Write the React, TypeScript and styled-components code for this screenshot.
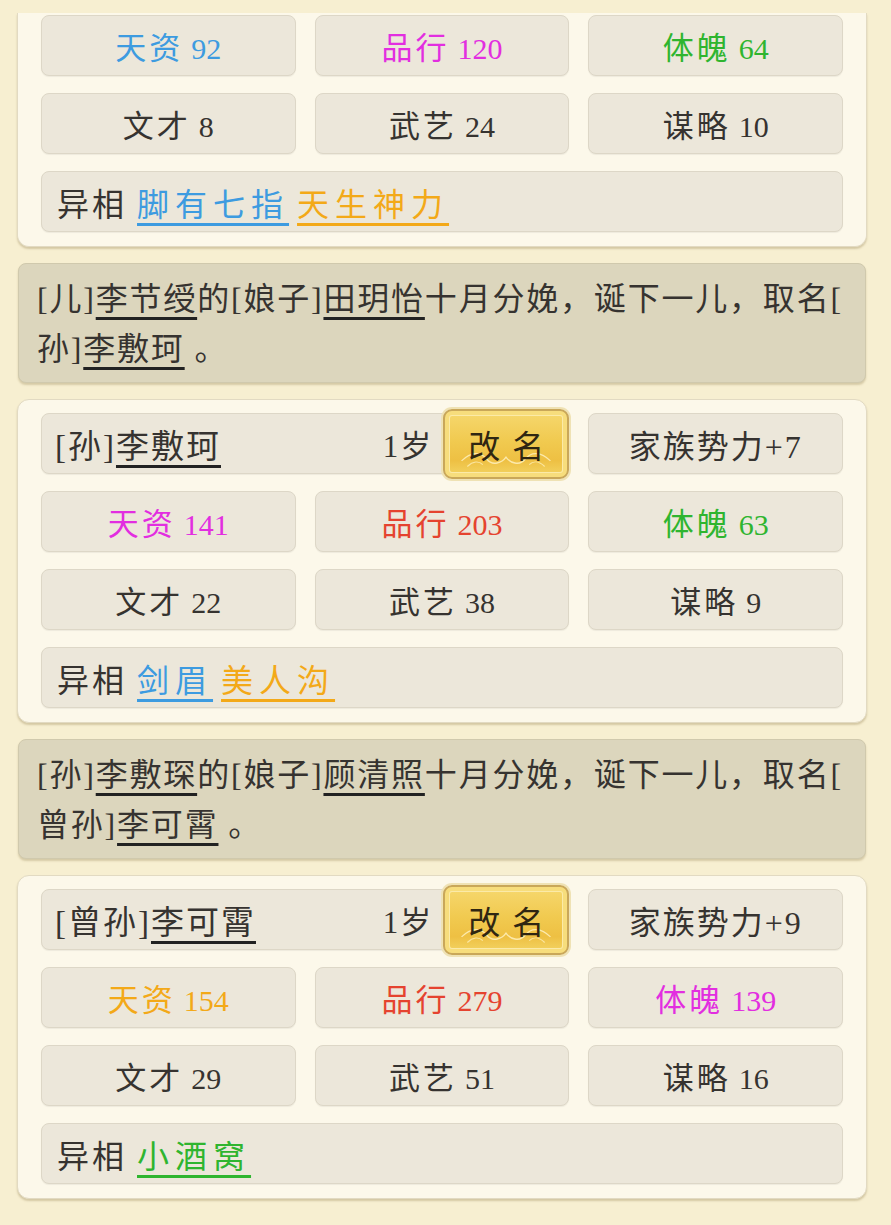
import React from "react";
import styled, { createGlobalStyle } from "styled-components";

const GlobalStyle = createGlobalStyle`
  html, body {
    margin: 0;
    padding: 0;
    background: #f7efd1;
  }
  body {
    font-family: "Liberation Serif", "Noto Sans CJK SC", serif;
    color: #363330;
  }
`;

type Tone = "plain" | "blue" | "pink" | "green" | "red" | "orange";

const tones: Record<Tone, string> = {
  plain: "#363330",
  blue: "#3d9be0",
  pink: "#e22ee0",
  green: "#2fb52f",
  red: "#e5432f",
  orange: "#f3a918",
};

type Stat = { label: string; value: number; tone: Tone };
type Trait = { text: string; tone: Tone };
type Person = {
  title?: string;
  name?: string;
  age?: number;
  power?: number;
  stats: Stat[];
  traits: Trait[];
};
type Seg = { t: string; u?: boolean };

const people: Person[] = [
  {
    stats: [
      { label: "天资", value: 92, tone: "blue" },
      { label: "品行", value: 120, tone: "pink" },
      { label: "体魄", value: 64, tone: "green" },
      { label: "文才", value: 8, tone: "plain" },
      { label: "武艺", value: 24, tone: "plain" },
      { label: "谋略", value: 10, tone: "plain" },
    ],
    traits: [
      { text: "脚有七指", tone: "blue" },
      { text: "天生神力", tone: "orange" },
    ],
  },
  {
    title: "[孙]",
    name: "李敷珂",
    age: 1,
    power: 7,
    stats: [
      { label: "天资", value: 141, tone: "pink" },
      { label: "品行", value: 203, tone: "red" },
      { label: "体魄", value: 63, tone: "green" },
      { label: "文才", value: 22, tone: "plain" },
      { label: "武艺", value: 38, tone: "plain" },
      { label: "谋略", value: 9, tone: "plain" },
    ],
    traits: [
      { text: "剑眉", tone: "blue" },
      { text: "美人沟", tone: "orange" },
    ],
  },
  {
    title: "[曾孙]",
    name: "李可霄",
    age: 1,
    power: 9,
    stats: [
      { label: "天资", value: 154, tone: "orange" },
      { label: "品行", value: 279, tone: "red" },
      { label: "体魄", value: 139, tone: "pink" },
      { label: "文才", value: 29, tone: "plain" },
      { label: "武艺", value: 51, tone: "plain" },
      { label: "谋略", value: 16, tone: "plain" },
    ],
    traits: [{ text: "小酒窝", tone: "green" }],
  },
];

const births: Seg[][][] = [
  [
    [
      { t: "[儿]" },
      { t: "李节绶", u: true },
      { t: "的[娘子]" },
      { t: "田玥怡", u: true },
      { t: "十月分娩，诞下一儿，取名[" },
    ],
    [{ t: "孙]" }, { t: "李敷珂", u: true }, { t: " 。" }],
  ],
  [
    [
      { t: "[孙]" },
      { t: "李敷琛", u: true },
      { t: "的[娘子]" },
      { t: "顾清照", u: true },
      { t: "十月分娩，诞下一儿，取名[" },
    ],
    [{ t: "曾孙]" }, { t: "李可霄", u: true }, { t: " 。" }],
  ],
];

function RenameButton() {
  return (
    <GoldButton>
      <Flourish viewBox="0 0 120 64" preserveAspectRatio="none">
        <path
          d="M14 50 C24 40 34 40 40 48 M106 50 C96 40 86 40 80 48 M40 48 C46 56 56 52 60 46 C64 52 74 56 80 48"
          fill="none"
          stroke="#fff3c4"
          strokeWidth="1.4"
          opacity="0.8"
        />
        <path
          d="M20 56 C26 50 32 50 36 54 M100 56 C94 50 88 50 84 54"
          fill="none"
          stroke="#fff3c4"
          strokeWidth="1.2"
          opacity="0.7"
        />
      </Flourish>
      <GoldLabel>改名</GoldLabel>
    </GoldButton>
  );
}

function PersonCard({ person, cut }: { person: Person; cut?: boolean }) {
  return (
    <Card $cut={cut}>
      {person.name && (
        <>
          <NameCell>
            <span>{person.title}</span>
            <Underlined>{person.name}</Underlined>
            <Age>
              <Num>{person.age}</Num>岁
            </Age>
            <RenameButton />
          </NameCell>
          <Cell>
            <PowerText>
              家族势力<Num>+{person.power}</Num>
            </PowerText>
          </Cell>
        </>
      )}
      {person.stats.map((s) => (
        <Cell key={s.label}>
          <StatText $tone={s.tone}>
            {s.label}
            <StatNum>{s.value}</StatNum>
          </StatText>
        </Cell>
      ))}
      <TraitCell>
        <TraitLabel>异相</TraitLabel>
        {person.traits.map((t) => (
          <TraitTag key={t.text} $tone={t.tone}>
            {t.text}
          </TraitTag>
        ))}
      </TraitCell>
    </Card>
  );
}

function BirthNote({ lines }: { lines: Seg[][] }) {
  return (
    <Note>
      {lines.map((line, i) => (
        <NoteLine key={i}>
          {line.map((seg, j) =>
            seg.u ? (
              <Underlined key={j}>{seg.t}</Underlined>
            ) : (
              <span key={j}>{seg.t}</span>
            )
          )}
        </NoteLine>
      ))}
    </Note>
  );
}

export default function App() {
  return (
    <>
      <GlobalStyle />
      <Page>
        <PersonCard person={people[0]} cut />
        <BirthNote lines={births[0]} />
        <PersonCard person={people[1]} />
        <BirthNote lines={births[1]} />
        <PersonCard person={people[2]} />
      </Page>
    </>
  );
}

const Page = styled.div`
  width: 850px;
  margin-left: 17px;
  padding: 13px 0 27px;
  display: flex;
  flex-direction: column;
  gap: 16px;
`;

const Card = styled.div<{ $cut?: boolean }>`
  background: #fcf8ea;
  border: 1px solid #e2dac2;
  border-top: ${(p) => (p.$cut ? "none" : "1px solid #e2dac2")};
  border-radius: ${(p) => (p.$cut ? "0 0 12px 12px" : "12px")};
  box-shadow: 0 2px 2px rgba(150, 130, 80, 0.35);
  padding: ${(p) => (p.$cut ? "2px" : "13px")} 23px 14px 23px;
  display: grid;
  grid-template-columns: repeat(3, 1fr);
  column-gap: 19px;
  row-gap: 17px;
`;

const Cell = styled.div`
  height: 61px;
  box-sizing: border-box;
  background: #ece7da;
  border: 1px solid #ddd7c7;
  border-radius: 8px;
  box-shadow: 0 1px 1px rgba(0, 0, 0, 0.06);
  display: flex;
  align-items: center;
  justify-content: center;
`;

const NameCell = styled(Cell)`
  grid-column: span 2;
  justify-content: flex-start;
  padding-left: 13px;
  font-size: 33px;
  letter-spacing: 2px;
`;

const Underlined = styled.span`
  text-decoration: underline;
  text-decoration-thickness: 3px;
  text-underline-offset: 7px;
  text-decoration-color: #222;
`;

const Age = styled.span`
  margin-left: auto;
  margin-right: 10px;
  font-size: 31px;
`;

const Num = styled.span`
  font-family: "Liberation Serif", serif;
`;

const GoldButton = styled.div`
  position: relative;
  width: 126px;
  height: 70px;
  margin: -4px -1px -5px 0;
  box-sizing: border-box;
  border-radius: 9px;
  border: 2px solid #c9a759;
  background: linear-gradient(180deg, #f6d86f 0%, #f1ca50 45%, #eec043 75%, #f3d565 100%);
  box-shadow: 0 0 0 2px #efe2b4, inset 0 0 0 4px #f7dd7c, inset 0 0 0 5px #fbeaa8;
  display: flex;
  align-items: center;
  justify-content: center;
`;

const Flourish = styled.svg`
  position: absolute;
  left: 3px;
  top: 3px;
  width: calc(100% - 6px);
  height: calc(100% - 6px);
`;

const GoldLabel = styled.span`
  position: relative;
  font-family: "Noto Sans CJK SC", sans-serif;
  font-size: 32px;
  letter-spacing: 12px;
  margin-right: -12px;
  color: #2f2612;
`;

const PowerText = styled.span`
  font-size: 32px;
  letter-spacing: 2px;
`;

const StatText = styled.span<{ $tone: Tone }>`
  color: ${(p) => tones[p.$tone]};
  font-size: 31px;
  letter-spacing: 3px;
`;

const StatNum = styled.span`
  font-family: "Liberation Serif", serif;
  font-size: 30px;
  letter-spacing: 0;
  margin-left: 8px;
`;

const TraitCell = styled(Cell)`
  grid-column: 1 / -1;
  justify-content: flex-start;
  padding-left: 15px;
  gap: 11px;
`;

const TraitLabel = styled.span`
  font-size: 32px;
  letter-spacing: 3px;
  margin-right: -1px;
`;

const TraitTag = styled.span<{ $tone: Tone }>`
  color: ${(p) => tones[p.$tone]};
  font-size: 32px;
  letter-spacing: 6px;
  margin-right: -3px;
  text-decoration: underline;
  text-decoration-thickness: 3px;
  text-underline-offset: 7px;
`;

const Note = styled.div`
  background: #dcd6bd;
  border: 1px solid #d0c9ad;
  border-radius: 8px;
  box-shadow: 0 2px 2px rgba(140, 120, 70, 0.3);
  margin: 0 1px;
  padding: 10px 18px 8px;
  font-size: 32px;
  line-height: 50px;
  letter-spacing: 1.8px;
  color: #363330;
`;

const NoteLine = styled.div`
  white-space: nowrap;
`;
